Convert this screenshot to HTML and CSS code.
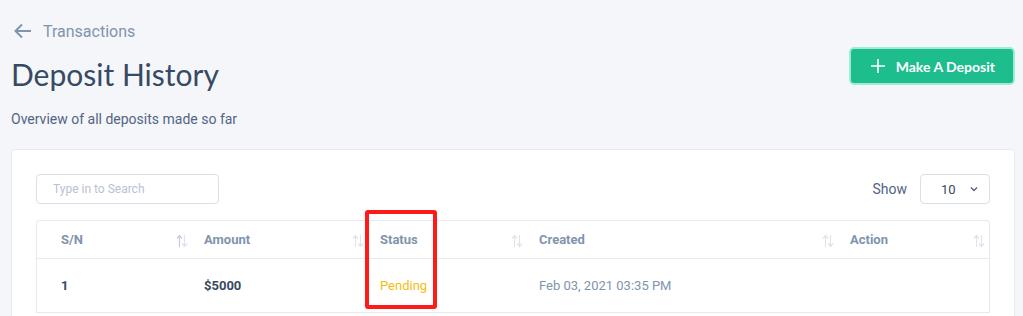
FILE: index.html
```html
<!DOCTYPE html>
<html lang="en">
<head>
    <meta charset="UTF-8">
    <meta name="viewport" content="width=device-width, initial-scale=1.0">
    <link rel="stylesheet" href="styles.css">
    <title>Deposit History</title>
</head>
<body>
    <div class="page-head">
        <div class="head-left">
            <a class="back-link" href="#">
                <svg width="18" height="16" viewBox="0 0 18 16"><path d="M17 8H2M8 1.5L1.5 8 8 14.5" fill="none" stroke="#8094ae" stroke-width="2"/></svg>
                <span>Transactions</span>
            </a>
            <h1>Deposit History</h1>
            <p class="sub">Overview of all deposits made so far</p>
        </div>
        <button class="btn-deposit" type="button">
            <svg width="16" height="16" viewBox="0 0 16 16"><path d="M8 1v14M1 8h14" stroke="#fff" stroke-width="1.6"/></svg>
            <span>Make A Deposit</span>
        </button>
    </div>

    <div class="card">
        <div class="toolbar">
            <input class="search" type="text" placeholder="Type in to Search">
            <div class="show">
                <span>Show</span>
                <div class="select">
                    <span>10</span>
                    <svg width="8" height="6" viewBox="0 0 8 6"><path d="M1 1.5L4 4.5 7 1.5" fill="none" stroke="#526484" stroke-width="1.4"/></svg>
                </div>
            </div>
        </div>

        <table class="tbl">
            <thead>
                <tr>
                    <th class="c-sn">S/N <svg class="sort" width="12" height="14" viewBox="0 0 12 14"><path d="M3.5 13V2M1 4.5L3.5 1.5 6 4.5" fill="none" stroke="#c3cddb" stroke-width="1.2"/><path d="M8.5 1v11M6 9.5L8.5 12.5 11 9.5" fill="none" stroke="#dfe4ec" stroke-width="1.2"/></svg></th>
                    <th class="c-amt">Amount <svg class="sort" width="12" height="14" viewBox="0 0 12 14"><path d="M3.5 13V2M1 4.5L3.5 1.5 6 4.5" fill="none" stroke="#dfe4ec" stroke-width="1.2"/><path d="M8.5 1v11M6 9.5L8.5 12.5 11 9.5" fill="none" stroke="#dfe4ec" stroke-width="1.2"/></svg></th>
                    <th class="c-status">Status <svg class="sort" width="12" height="14" viewBox="0 0 12 14"><path d="M3.5 13V2M1 4.5L3.5 1.5 6 4.5" fill="none" stroke="#dfe4ec" stroke-width="1.2"/><path d="M8.5 1v11M6 9.5L8.5 12.5 11 9.5" fill="none" stroke="#dfe4ec" stroke-width="1.2"/></svg></th>
                    <th class="c-created">Created <svg class="sort" width="12" height="14" viewBox="0 0 12 14"><path d="M3.5 13V2M1 4.5L3.5 1.5 6 4.5" fill="none" stroke="#dfe4ec" stroke-width="1.2"/><path d="M8.5 1v11M6 9.5L8.5 12.5 11 9.5" fill="none" stroke="#dfe4ec" stroke-width="1.2"/></svg></th>
                    <th class="c-action">Action <svg class="sort" width="12" height="14" viewBox="0 0 12 14"><path d="M3.5 13V2M1 4.5L3.5 1.5 6 4.5" fill="none" stroke="#dfe4ec" stroke-width="1.2"/><path d="M8.5 1v11M6 9.5L8.5 12.5 11 9.5" fill="none" stroke="#dfe4ec" stroke-width="1.2"/></svg></th>
                </tr>
            </thead>
            <tbody>
                <tr>
                    <td class="c-sn bold">1</td>
                    <td class="bold">$5000</td>
                    <td class="pending">Pending</td>
                    <td class="muted">Feb 03, 2021 03:35 PM</td>
                    <td></td>
                </tr>
            </tbody>
        </table>
        <div class="highlight"></div>
    </div>
</body>
</html>
```

FILE: styles.css
```css
body {
    margin: 0;
    background: #f5f6fa;
    font-family: Roboto, "Liberation Sans", sans-serif;
    color: #526484;
    overflow: hidden;
}

.page-head {
    display: flex;
    justify-content: space-between;
    align-items: flex-start;
    padding: 20px 8px 0 11px;
}

.back-link {
    display: flex;
    align-items: center;
    gap: 11px;
    color: #8094ae;
    text-decoration: none;
    font-size: 16px;
    margin-left: 3px;
    height: 22px;
}

h1 {
    margin: 12px 0 0;
    font-family: Lato, sans-serif;
    font-weight: 400;
    font-size: 30px;
    line-height: 40px;
    color: #364a63;
}

.sub {
    margin: 15px 0 0;
    font-size: 14px;
    line-height: 20px;
    color: #526484;
}

.btn-deposit {
    margin-top: 27px;
    display: flex;
    align-items: center;
    gap: 10px;
    height: 38px;
    padding: 0 18px 0 19px;
    background: #1dbd8e;
    color: #fff;
    border: 2px solid #9eecd4;
    border-radius: 5px;
    font-family: Lato, sans-serif;
    font-weight: 700;
    font-size: 14px;
}

.card {
    position: relative;
    margin: 20px 8px 0 11px;
    background: #fff;
    border: 1px solid #e5e9f2;
    border-radius: 4px;
    padding: 24px 24px 0 24px;
    height: 200px;
}

.toolbar {
    display: flex;
    justify-content: space-between;
    align-items: center;
}

.search {
    width: 183px;
    height: 30px;
    box-sizing: border-box;
    border: 1px solid #dbdfea;
    border-radius: 4px;
    padding: 0 16px;
    font-family: Roboto, sans-serif;
    font-size: 12px;
}

.search::placeholder {
    color: #b6c2d6;
}

.show {
    display: flex;
    align-items: center;
    gap: 13px;
    font-size: 14px;
}

.select {
    width: 70px;
    height: 30px;
    box-sizing: border-box;
    border: 1px solid #dbdfea;
    border-radius: 4px;
    display: flex;
    align-items: center;
    justify-content: space-between;
    padding: 0 11px 0 20px;
    font-size: 13px;
    color: #364a63;
}

.tbl {
    margin-top: 16px;
    width: 100%;
    border-collapse: separate;
    border-spacing: 0;
    border: 1px solid #e5e9f2;
    border-bottom: none;
    border-radius: 4px 4px 0 0;
    font-size: 13px;
}

.tbl th {
    position: relative;
    text-align: left;
    height: 37px;
    padding: 0 12px;
    font-weight: 700;
    color: #8094ae;
    border-bottom: 1px solid #e5e9f2;
}

.tbl td {
    height: 53px;
    padding: 0 12px;
    border-bottom: 1px solid #e5e9f2;
}

.tbl .c-sn { width: 119px; padding-left: 24px; }
.tbl .c-amt { width: 152px; }
.tbl .c-status { width: 135px; }
.tbl .c-created { width: 287px; }

.sort {
    position: absolute;
    right: 4px;
    top: 13px;
}

.bold {
    font-weight: 700;
    color: #364a63;
}

.pending {
    color: #f4bd0e;
}

.muted {
    color: #8094ae;
}

.highlight {
    position: absolute;
    left: 353px;
    top: 60px;
    width: 64px;
    height: 91px;
    border: 4px solid #ff1a1a;
    border-radius: 3px;
}
```
